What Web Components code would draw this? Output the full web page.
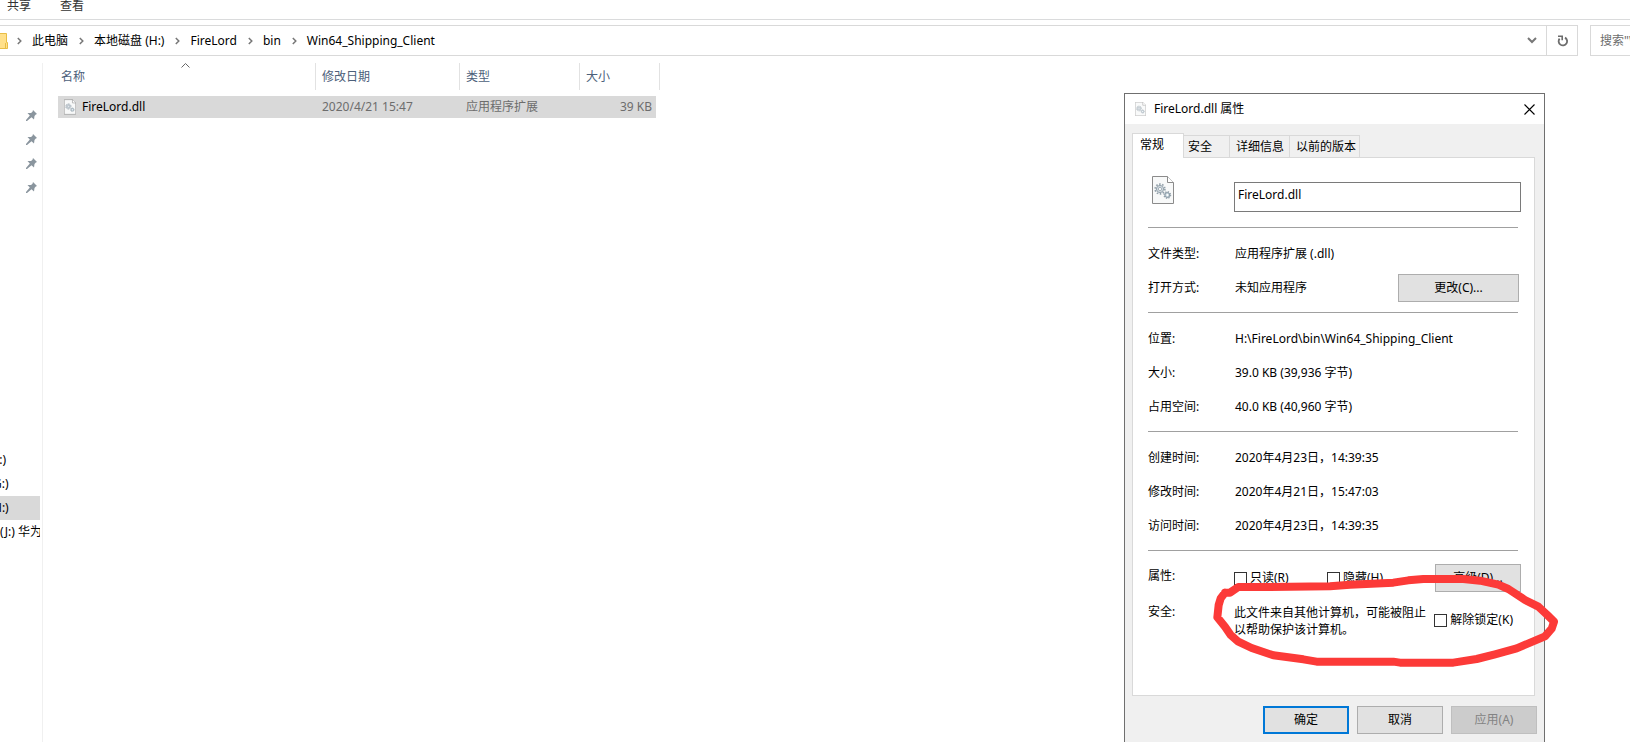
<!DOCTYPE html>
<html lang="zh-CN">
<head>
<meta charset="utf-8">
<title>Win64_Shipping_Client</title>
<style>
html,body{margin:0;height:100%;overflow:hidden;background:#fff}
body{font:12px/16px "Noto Sans","Noto Sans CJK SC",sans-serif;color:#000}
</style>
</head>
<body>
<desktop-view></desktop-view>
<script>
const define=(name,html)=>{
  const t=document.createElement('template');
  t.innerHTML='<style>*{box-sizing:border-box}button,input{font:inherit;color:inherit;margin:0}</style>'+html;
  customElements.define(name,class extends HTMLElement{
    constructor(){super();this.attachShadow({mode:'open'}).append(t.content.cloneNode(true));}
  });
};

define('file-icon',`<style>:host{display:block;flex:none;width:22px;height:28px}svg{display:block;width:100%;height:100%}</style>
<svg viewBox="0 0 22 28"><path d="M.5.5h15l6 6v21H.5z" fill="#f8f9f9" stroke="#8b8b8b"/><path d="M15.5.5v6h6" fill="#fff" stroke="#8b8b8b"/>
<circle cx="8" cy="13" r="4.9" fill="none" stroke="#93a1ab" stroke-width="1.6" stroke-dasharray="1.6 1.48"/><circle cx="8" cy="13" r="3.6" fill="#d4dce1" stroke="#93a1ab"/><circle cx="8" cy="13" r="1.6" fill="#fff" stroke="#93a1ab" stroke-width=".8"/>
<circle cx="15.3" cy="19" r="3.3" fill="none" stroke="#93a1ab" stroke-width="1.3" stroke-dasharray="1.3 1.3"/><circle cx="15.3" cy="19" r="2.5" fill="#c5d3dc" stroke="#8797a2"/><circle cx="15.3" cy="19" r="1" fill="#fff"/></svg>`);

define('crumb-item',`<style>:host{display:flex;align-items:center}svg{width:5px;height:8px;margin:0 10px 0 7px}a{color:#000;text-decoration:none;white-space:nowrap;margin-right:4px}</style>
<svg viewBox="0 0 5 8"><path d="M.8 1l3 3-3 3" fill="none" stroke="#777" stroke-width="1.5"/></svg><a href="#"><slot></slot></a>`);

define('ribbon-tabs',`<style>:host{display:flex;gap:29px;height:20px;padding-left:7px;border-bottom:1px solid #dadbdc;color:#333}a{color:inherit;text-decoration:none;margin-top:-2px}</style>
<a href="#">共享</a><a href="#">查看</a>`);

define('address-bar',`<style>:host{display:flex;margin-top:5px;height:31px}
.path{flex:1;display:flex;align-items:center;border:1px solid #d9d9d9;border-left:0;min-width:0}
.folder{width:8px;height:16px;margin-right:2px}.spacer{flex:1}
button{border:0;background:none;padding:0;display:grid;place-items:center;height:29px;width:28px}
.refresh{border-left:1px solid #d9d9d9;width:31px}
.search{width:40px;margin-left:12px;border:1px solid #d9d9d9;border-right:0;padding:0 0 0 9px;border-radius:0;outline:0}
.search::placeholder{color:#6d6d6d}</style>
<div class="path"><svg class="folder" viewBox="0 0 8 16"><path d="M0 .5h6.500v9h1v6H0" fill="#ffe08a" stroke="#e8bd45"/><path d="M5.500 10v5" stroke="#e8bd45"/></svg>
<crumb-item>此电脑</crumb-item><crumb-item>本地磁盘 (H:)</crumb-item><crumb-item>FireLord</crumb-item><crumb-item>bin</crumb-item><crumb-item>Win64_Shipping_Client</crumb-item><span class="spacer"></span>
<button aria-label="展开"><svg width="10" height="7" viewBox="0 0 10 7"><path d="M1 1l4 4 4-4" fill="none" stroke="#777" stroke-width="2"/></svg></button>
<button class="refresh" aria-label="刷新"><svg width="11" height="12" viewBox="0 0 11 12"><path d="M8 2.600A4.200 4.200 0 1 1 2.600 3.600" fill="none" stroke="#6d6d6d" stroke-width="1.800"/><path d="M1 1.200h4.200v4" fill="none" stroke="#6d6d6d" stroke-width="1.600"/></svg></button></div>
<input class="search" aria-label="搜索" placeholder='搜索"Win64_Shipping_Client"'>`);

define('pin-item',`<style>:host{display:flex;justify-content:flex-end;align-items:center;height:24px;padding-right:5px}</style>
<svg width="11" height="11" viewBox="0 0 11 11"><path d="M7 0l4 4-1.200.5L8.500 6 8 9.500 5.500 7.300 1 11H0v-1l3.800-4.500L1.500 3H5l1.500-1.300z" fill="#8a959e"/></svg>`);

define('drive-item',`<style>:host{display:flex;align-items:center;height:24px;width:40px;overflow:hidden;white-space:pre;color:#000}:host([selected]){background:#d9d9d9}a{color:inherit;text-decoration:none;margin-left:-7px}:host([wide]) a{margin-left:0}</style>
<a href="#"><slot></slot></a>`);

define('nav-pane',`<style>:host{display:flex;flex-direction:column;width:43px;flex:none;border-right:1px solid #f0f0f0;padding-top:40px}.drives{margin-top:249px}</style>
<pin-item></pin-item><pin-item></pin-item><pin-item></pin-item><pin-item></pin-item>
<div class="drives"><drive-item>F:)</drive-item><drive-item>G:)</drive-item><drive-item selected>H:)</drive-item><drive-item wide>(J:) 华为</drive-item></div>`);

define('file-list',`<style>:host{display:block;flex:1;padding-left:15px}
table{border-collapse:separate;border-spacing:0;table-layout:fixed;width:602px}
th{height:27px;font-weight:400;text-align:left;color:#4c607a;border-right:1px solid #e2e2e2;padding:0 0 5px 6px;vertical-align:bottom;position:relative}
th:first-child{padding-left:3px}
th svg{position:absolute;left:123px;top:0}
.gap td{height:6px;padding:0}
td{height:22px;padding:0 0 0 6px;color:#6d6d6d}
.row td{background:linear-gradient(#d9d9d9,#d9d9d9)}
.name{display:flex;align-items:center;gap:6px;color:#000;text-decoration:none}
.row td:last-child{text-align:right;padding-right:8px;background-size:calc(100% - 4px) 100%;background-repeat:no-repeat}
file-icon{width:12px;height:16px}</style>
<table><colgroup><col style="width:258px"><col style="width:144px"><col style="width:120px"><col style="width:80px"></colgroup>
<thead><tr><th>名称<svg width="9" height="5" viewBox="0 0 9 5"><path d="M.5 4.500l4-4 4 4" fill="none" stroke="#666"/></svg></th><th>修改日期</th><th>类型</th><th>大小</th></tr></thead>
<tbody><tr class="gap"><td colspan="4"></td></tr><tr class="row"><td><a class="name" href="#"><file-icon></file-icon>FireLord.dll</a></td><td>2020/4/21 15:47</td><td>应用程序扩展</td><td>39 KB</td></tr></tbody></table>`);

define('push-button',`<style>:host{display:block;width:86px;height:28px;flex:none}button{width:100%;height:100%;padding:0;background:#e1e1e1;border:1px solid #adadad;border-radius:0}
:host([primary]) button{border:2px solid #0078d7}:host([off]) button{background:#ccc;border-color:#bfbfbf;color:#838383}</style><button><slot></slot></button>`);

define('check-field',`<style>:host{display:block}label{display:flex;align-items:center;gap:3px;white-space:nowrap}
input{appearance:none;width:13px;height:13px;border:1px solid #333;background:#fff}</style><label><input type="checkbox"><span><slot></slot></span></label>`);

define('info-row',`<style>:host{display:grid;grid-template-columns:87px 1fr auto;height:34px;align-items:center}slot[name=action]{display:block}</style>
<span><slot name="label"></slot></span><span><slot></slot></span><slot name="action"></slot>`);

define('dialog-tabs',`<style>:host{display:flex;align-items:flex-end;height:24px}
button{height:22px;border:1px solid #d9d9d9;border-left:0;border-bottom:0;background:#f0f0f0;padding:0 4px;text-align:left;white-space:nowrap}
.on{height:25px;margin-bottom:-1px;background:#fff;border-left:1px solid #d9d9d9;padding:0 7px 3px;width:52px;z-index:1}
.s{width:46px}.m{width:60px;padding-left:6px}.l{width:70px;padding-left:6px}</style>
<button class="on">常规</button><button class="s">安全</button><button class="m">详细信息</button><button class="l">以前的版本</button>`);

define('marker-stroke',`<style>:host{display:block;pointer-events:none}svg{display:block;width:100%;height:100%}</style>
<svg viewBox="0 0 1380 576"><path d="M345 128L360 128 385 111 480 111 660 109 720 104 850 98 895 91 940 87 1060 87 1110 92 1165 104 1195 117 1245 150 1285 170 1310 193 1332 215 1325 236 1305 259 1220 295 1155 313 1100 327 1030 338 870 338 850 335 620 335 580 328 490 316 425 294 385 275 362 255 345 230 322 202 326 165 332 145 345 128" fill="none" stroke="#fc3a38" stroke-width="24" stroke-linejoin="round" stroke-linecap="round"/></svg>`);

define('properties-dialog',`<style>:host{display:block;border:1px solid #6f6f6f;background:#f0f0f0;color:#000}
header{display:flex;align-items:center;height:30px;background:#fff;padding:0 9px 0 10px}
header file-icon{width:11px;height:14px;opacity:.8}h1{font:inherit;margin:0 0 0 8px;flex:1}
header button{border:0;background:none;padding:0;width:11px;height:11px}header svg{display:block}
main{padding:9px 9px 0 7px}
.panel{border:1px solid #d9d9d9;background:#fff;height:539px;padding:18px 15px 0}
.file{display:grid;grid-template-columns:86px 1fr;margin:0 -2px 0 0;height:51px}
.file file-icon{margin-left:4px}
.file input{height:30px;margin-top:6px;border:1px solid #7a7a7a;border-radius:0;padding:0 3px 6px;width:100%;outline:0}
section{border-top:1px solid #a0a0a0;padding:9px 0 7px;margin-right:1px}
.open push-button{width:121px;margin-right:-1px}
.attrs{display:grid;grid-template-columns:86px 93px 1fr auto;align-items:center;margin-right:-3px;padding-top:4px}
.attrs>span{align-self:start;line-height:24px}
.security{display:grid;grid-template-columns:86px 1fr auto;margin-top:12px}
.security p{margin:0;line-height:17px}.security check-field{padding-top:8px;margin-right:5px}
footer{display:flex;gap:8px;justify-content:flex-end;padding:10px 7px 20px}
marker-stroke{position:absolute;left:-15px;top:456px;width:460px;height:192px}</style>
<header><file-icon></file-icon><h1>FireLord.dll 属性</h1><button aria-label="关闭"><svg width="11" height="11" viewBox="0 0 11 11"><path d="M.5.5l10 10M10.500.5l-10 10" stroke="#000" stroke-width="1.100"/></svg></button></header>
<main><dialog-tabs></dialog-tabs>
<div class="panel">
<div class="file"><file-icon></file-icon><input aria-label="文件名" value="FireLord.dll"></div>
<section><info-row><span slot="label">文件类型:</span>应用程序扩展 (.dll)</info-row><info-row class="open"><span slot="label">打开方式:</span>未知应用程序<push-button slot="action">更改(C)...</push-button></info-row></section>
<section><info-row><span slot="label">位置:</span>H:\\FireLord\\bin\\Win64_Shipping_Client</info-row><info-row><span slot="label">大小:</span>39.0 KB (39,936 字节)</info-row><info-row><span slot="label">占用空间:</span>40.0 KB (40,960 字节)</info-row></section>
<section><info-row><span slot="label">创建时间:</span>2020年4月23日，14:39:35</info-row><info-row><span slot="label">修改时间:</span>2020年4月21日，15:47:03</info-row><info-row><span slot="label">访问时间:</span>2020年4月23日，14:39:35</info-row></section>
<section><div class="attrs"><span>属性:</span><check-field>只读(R)</check-field><check-field>隐藏(H)</check-field><push-button>高级(D)...</push-button></div>
<div class="security"><span>安全:</span><p>此文件来自其他计算机，可能被阻止<br>以帮助保护该计算机。</p><check-field>解除锁定(K)</check-field></div></section>
</div></main>
<footer><push-button primary>确定</push-button><push-button>取消</push-button><push-button off>应用(A)</push-button></footer>
<marker-stroke></marker-stroke>`);

define('desktop-view',`<style>:host{display:flex;flex-direction:column;height:100vh;position:relative;overflow:hidden}
.content{flex:1;display:flex;padding-top:7px;min-height:0}
properties-dialog{position:absolute;right:85px;top:93px;width:421px}</style>
<ribbon-tabs></ribbon-tabs><address-bar></address-bar>
<div class="content"><nav-pane></nav-pane><file-list></file-list></div>
<properties-dialog></properties-dialog>`);
</script>
</body>
</html>
